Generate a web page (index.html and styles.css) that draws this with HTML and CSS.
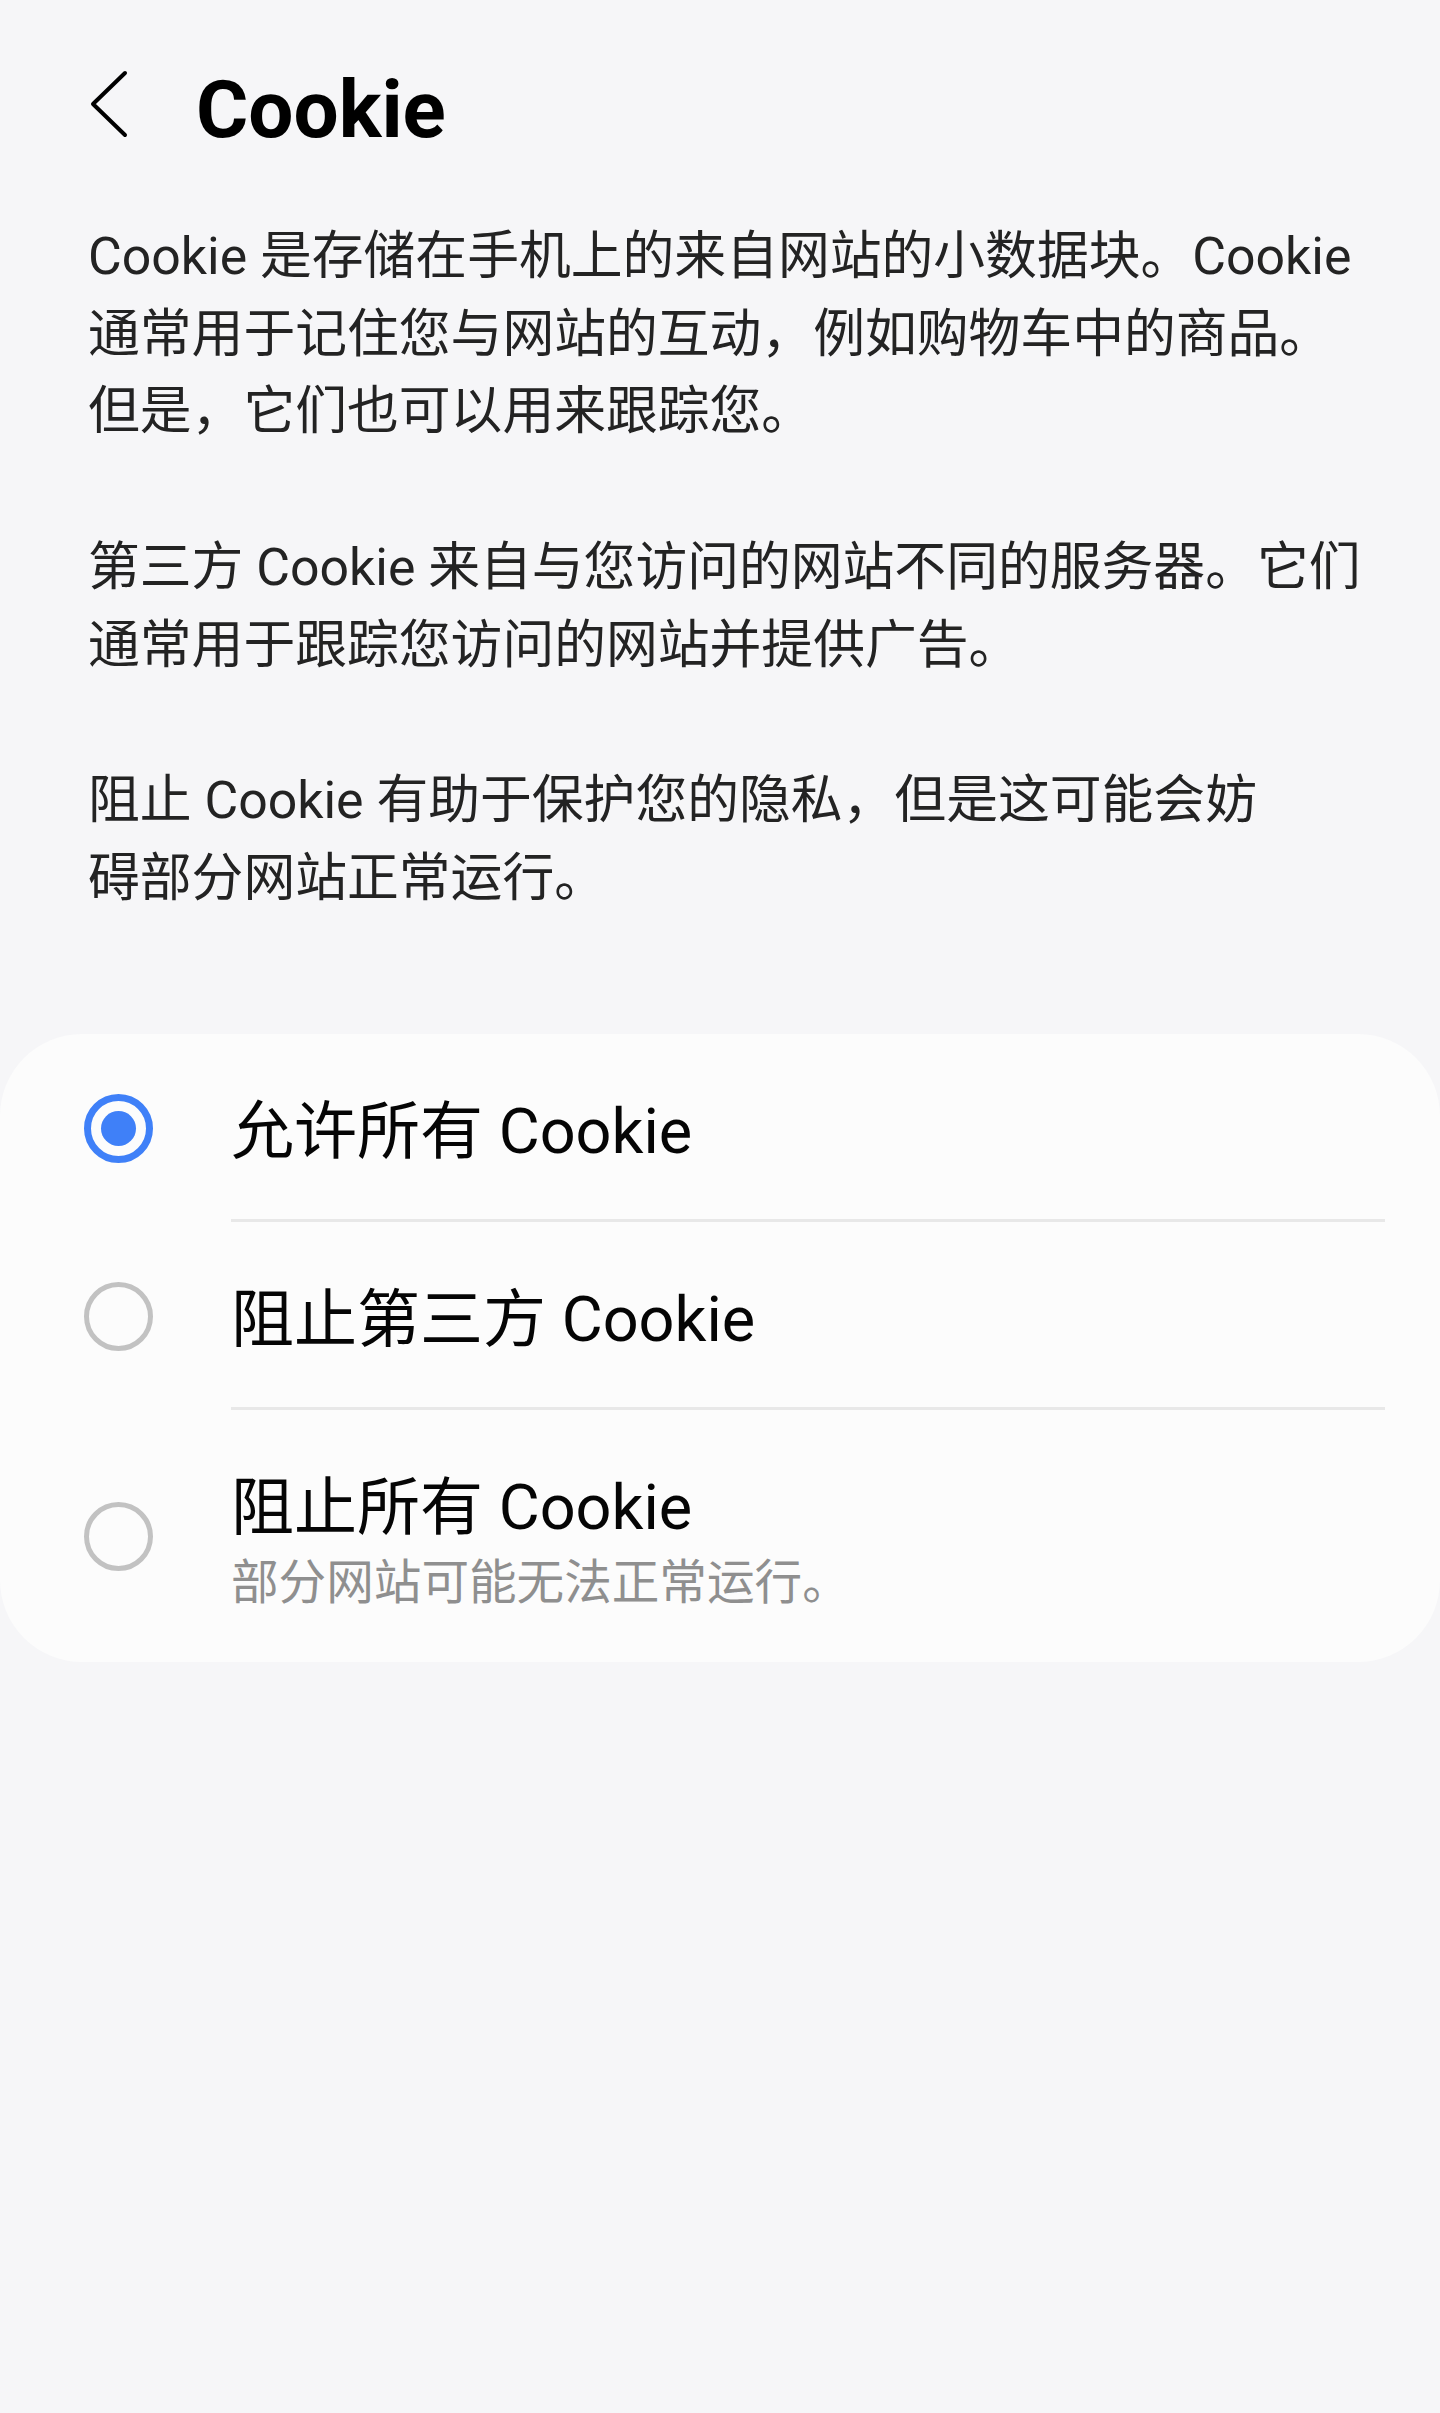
FILE: index.html
```html
<!DOCTYPE html>
<html lang="zh-CN">
<head>
<meta charset="utf-8">
<title>Cookie</title>
<link rel="stylesheet" href="styles.css">
</head>
<body>
<div class="page">
  <header class="header">
    <svg class="back" width="40" height="70" viewBox="0 0 40 70" aria-label="返回">
      <path d="M37 3 L5 34 L37 65" fill="none" stroke="#000" stroke-width="4" stroke-linecap="round" stroke-linejoin="round"/>
    </svg>
    <h1 class="title">Cookie</h1>
  </header>

  <div class="intro">
    <p>Cookie 是存储在手机上的来自网站的小数据块。Cookie<br>通常用于记住您与网站的互动，例如购物车中的商品。<br>但是，它们也可以用来跟踪您。</p>
    <p>第三方 Cookie 来自与您访问的网站不同的服务器。它们<br>通常用于跟踪您访问的网站并提供广告。</p>
    <p>阻止 Cookie 有助于保护您的隐私，但是这可能会妨<br>碍部分网站正常运行。</p>
  </div>

  <div class="card">
    <div class="row">
      <div class="radio-cell"><span class="radio checked"></span></div>
      <div class="row-body"><div class="row-title">允许所有 Cookie</div></div>
    </div>
    <div class="row">
      <div class="radio-cell"><span class="radio"></span></div>
      <div class="row-body"><div class="row-title">阻止第三方 Cookie</div></div>
    </div>
    <div class="row">
      <div class="radio-cell"><span class="radio"></span></div>
      <div class="row-body last">
        <div class="row-title">阻止所有 Cookie</div>
        <div class="row-sub">部分网站可能无法正常运行。</div>
      </div>
    </div>
  </div>
</div>
</body>
</html>
```

FILE: styles.css
```css
html, body {
  margin: 0;
  padding: 0;
  background: #f6f6f8;
}

body {
  font-family: Roboto, "Noto Sans CJK SC", sans-serif;
  color: #222;
}

.page {
  min-height: 2413px;
}

.header {
  display: flex;
  align-items: flex-start;
  padding: 70px 0 0 88px;
}

.back {
  display: block;
  flex: none;
}

.title {
  margin: 0 0 0 68px;
  font-family: Roboto, "Noto Sans CJK SC", sans-serif;
  font-size: 80px;
  line-height: 80px;
  font-weight: 700;
  color: #000;
}

.intro {
  padding: 68px 20px 0 88px;
}

.intro p {
  margin: 0 0 77.7px 0;
  font-size: 51.8px;
  line-height: 77.7px;
  color: #232323;
  white-space: nowrap;
}

.intro p:last-child {
  margin-bottom: 0;
}

.card {
  margin-top: 117px;
  background: #fcfcfc;
  border-radius: 82px;
}

.row {
  display: flex;
}

.radio-cell {
  width: 231px;
  flex: none;
  display: flex;
  align-items: center;
  box-sizing: border-box;
  padding-left: 84px;
}

.radio {
  width: 69px;
  height: 69px;
  box-sizing: border-box;
  border-radius: 50%;
  border: 5px solid #c2c2c2;
  display: flex;
  align-items: center;
  justify-content: center;
}

.radio.checked {
  border: 7px solid #3f80f8;
}

.radio.checked::after {
  content: "";
  width: 35px;
  height: 35px;
  border-radius: 50%;
  background: #3f80f8;
}

.row-body {
  flex: 1;
  margin-right: 55px;
  padding: 59px 0 48px 0;
  border-bottom: 3px solid #e8e8e8;
}

.row-body.last {
  border-bottom: none;
  padding-bottom: 43px;
}

.row-title {
  font-size: 63px;
  line-height: 78px;
  color: #050505;
}

.row-sub {
  font-size: 47.6px;
  line-height: 72px;
  color: #8f8f8f;
}
```
